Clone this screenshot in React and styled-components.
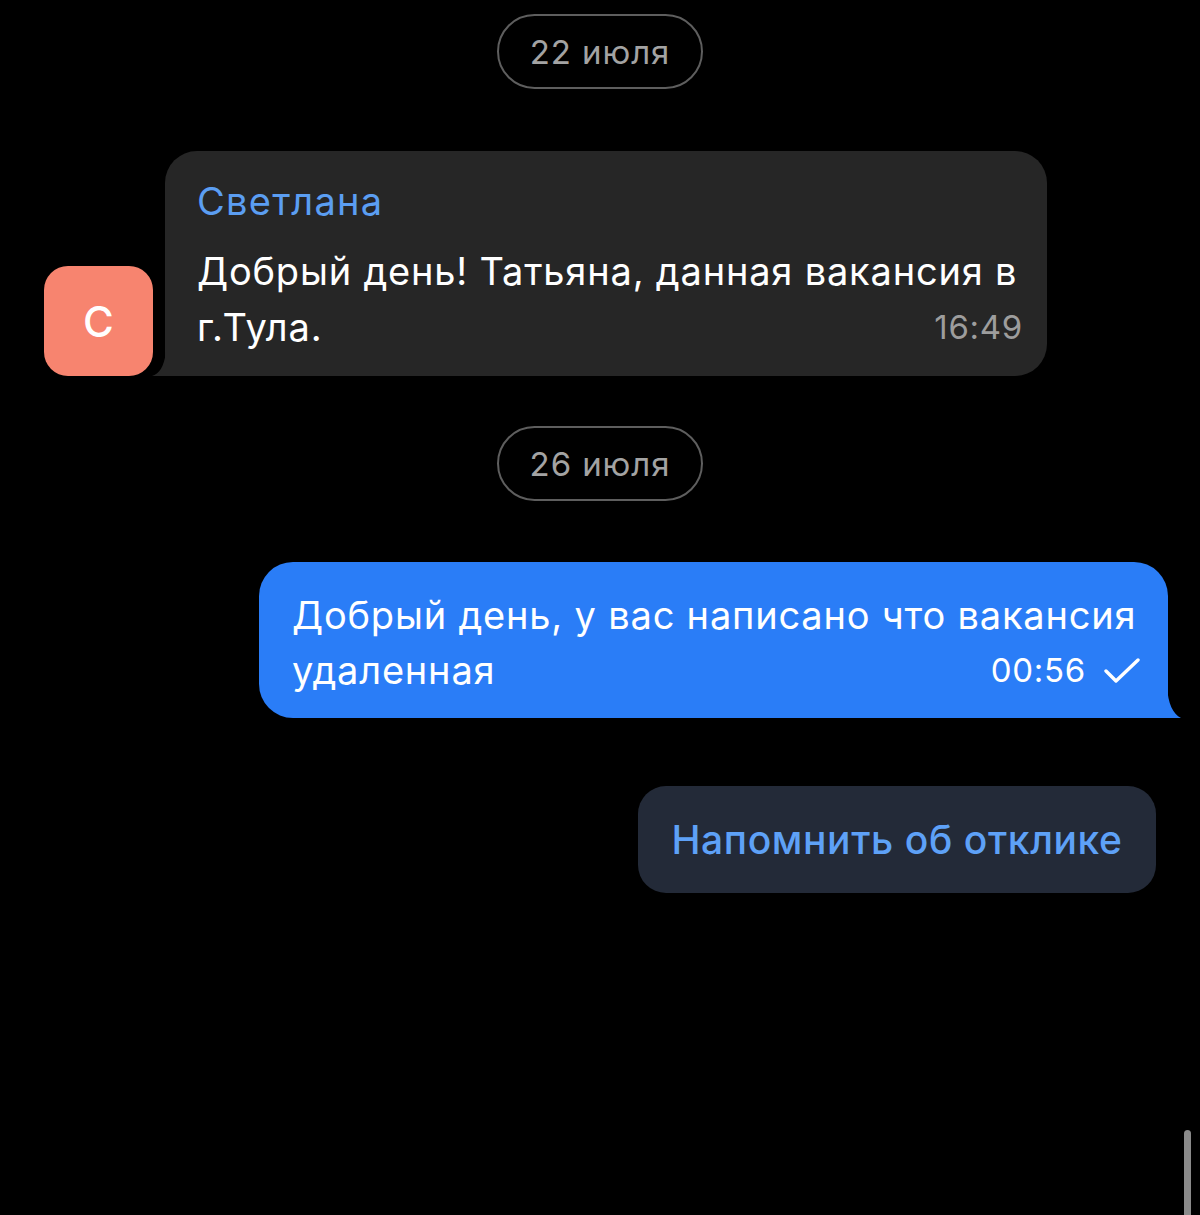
import React from "react";
import styled, { createGlobalStyle } from "styled-components";

const GlobalStyle = createGlobalStyle`
   html, body {
      margin: 0;
      padding: 0;
      background: #000000;
   }
   body {
      font-family: Inter, "Noto Sans", "Liberation Sans", sans-serif;
      -webkit-font-smoothing: antialiased;
   }
`;

const Page = styled.div`
   position: relative;
   min-height: 1215px;
   background: #000000;
   display: flex;
   flex-direction: column;
   padding-top: 14px;
   box-sizing: border-box;
   overflow: hidden;
`;

const DatePill = styled.div`
   align-self: center;
   width: 206px;
   height: 75px;
   box-sizing: border-box;
   border: 2px solid #5e5e5e;
   border-radius: 38px;
   display: flex;
   align-items: center;
   justify-content: center;
   color: #a3a3a3;
   font-size: 33px;
   letter-spacing: 0.9px;
   margin-bottom: ${(p) => p.$after}px;
`;

const IncomingRow = styled.div`
   display: flex;
   align-items: flex-end;
   gap: 12px;
   padding-left: 44px;
   margin-bottom: 50px;
`;

const Avatar = styled.div`
   width: 109px;
   height: 110px;
   border-radius: 24px;
   background: #f7846f;
   color: #ffffff;
   font-size: 42px;
   font-weight: 500;
   display: flex;
   align-items: center;
   justify-content: center;
   flex-shrink: 0;
`;

const Bubble = styled.div`
   position: relative;
   box-sizing: border-box;
   width: ${(p) => p.$width}px;
   background: ${(p) => (p.$out ? "#2a7df7" : "#262626")};
   color: #ffffff;
   border-radius: ${(p) => (p.$out ? "34px 34px 0 34px" : "32px 32px 32px 0")};
   padding: ${(p) => p.$pad};
`;

const Tail = styled.svg`
   position: absolute;
   bottom: 0;
   ${(p) => (p.$out ? "right: -13px;" : "left: -13px;")}
`;

const Name = styled.div`
   color: #5b9ef2;
   font-size: 38px;
   letter-spacing: 1.3px;
   line-height: 56px;
   margin-bottom: 14px;
`;

const Line = styled.div`
   font-size: 38px;
   letter-spacing: 0.8px;
   line-height: ${(p) => p.$lh || 56}px;
   white-space: nowrap;
`;

const LastLine = styled(Line)`
   display: flex;
   align-items: center;
   justify-content: space-between;
`;

const Meta = styled.span`
   display: flex;
   align-items: center;
   gap: 18px;
   font-size: 33px;
   letter-spacing: 0.7px;
   color: ${(p) => (p.$out ? "#ffffff" : "#9d9d9d")};
`;

const OutgoingRow = styled.div`
   display: flex;
   justify-content: flex-end;
   padding-right: 32px;
   margin-bottom: 68px;
`;

const ActionRow = styled.div`
   display: flex;
   justify-content: flex-end;
   padding-right: 44px;
`;

const RemindButton = styled.button`
   width: 518px;
   height: 107px;
   border: none;
   border-radius: 28px;
   background: #232a38;
   color: #5ea1f7;
   font-family: inherit;
   font-size: 39px;
   letter-spacing: 0.6px;
   font-weight: 500;
   cursor: pointer;
`;

const Scrollbar = styled.div`
   position: absolute;
   right: 9px;
   top: 1130px;
   width: 7px;
   height: 100px;
   border-radius: 4px;
   background: #8a8a8a;
`;

function Check() {
   return (
      <svg width="36" height="26" viewBox="0 0 36 26">
         <polyline
            points="2,13 12,23 34,2"
            fill="none"
            stroke="#ffffff"
            strokeWidth="3.4"
            strokeLinecap="round"
            strokeLinejoin="round"
         />
      </svg>
   );
}

export default function App() {
   return (
      <>
         <GlobalStyle />
         <Page>
            <DatePill $after={62}>22 июля</DatePill>

            <IncomingRow>
               <Avatar>С</Avatar>
               <Bubble $width={882} $pad="22px 24px 21px 32px">
                  <Tail width="14" height="24" viewBox="0 0 14 24">
                     <path d="M14 0 L14 24 L0 24 C7 22 12 15 14 0 Z" fill="#262626" />
                  </Tail>
                  <Name>Светлана</Name>
                  <Line>Добрый день! Татьяна, данная вакансия в</Line>
                  <LastLine>
                     <span>г.Тула.</span>
                     <Meta>16:49</Meta>
                  </LastLine>
               </Bubble>
            </IncomingRow>

            <DatePill $after={61}>26 июля</DatePill>

            <OutgoingRow>
               <Bubble $out $width={909} $pad="26px 28px 20px 33px">
                  <Tail $out width="14" height="32" viewBox="0 0 14 32">
                     <path d="M0 0 L0 32 L14 32 C6 28 1 18 0 0 Z" fill="#2a7df7" />
                  </Tail>
                  <Line $lh={55}>Добрый день, у вас написано что вакансия</Line>
                  <LastLine $lh={55}>
                     <span>удаленная</span>
                     <Meta $out>
                        00:56
                        <Check />
                     </Meta>
                  </LastLine>
               </Bubble>
            </OutgoingRow>

            <ActionRow>
               <RemindButton>Напомнить об отклике</RemindButton>
            </ActionRow>

            <Scrollbar />
         </Page>
      </>
   );
}
